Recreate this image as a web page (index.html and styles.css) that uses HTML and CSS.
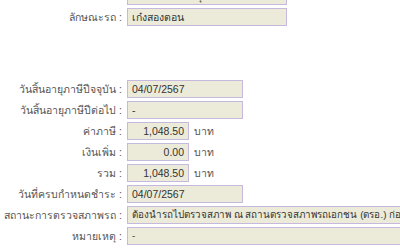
FILE: index.html
```html
<!DOCTYPE html>
<html lang="th">
<head>
    <meta charset="UTF-8">
    <meta name="viewport" content="width=device-width, initial-scale=1.0">
    <title>ข้อมูลภาษีรถ</title>
    <link rel="stylesheet" href="styles.css">
</head>
<body>
    <div class="form">
        <div class="row">
            <span class="label">ประเภทรถ :</span>
            <span class="box wide">รถยนต์นั่งส่วนบุคคลไม่เกิน 7 คน</span>
        </div>
        <div class="row">
            <span class="label">ลักษณะรถ :</span>
            <span class="box wide">เก๋งสองตอน</span>
        </div>
    </div>

    <div class="form tax">
        <div class="row">
            <span class="label">วันสิ้นอายุภาษีปีจจุบัน :</span>
            <span class="box date">04/07/2567</span>
        </div>
        <div class="row">
            <span class="label">วันสิ้นอายุภาษีปีต่อไป :</span>
            <span class="box date">-</span>
        </div>
        <div class="row">
            <span class="label">ค่าภาษี :</span>
            <span class="box money">1,048.50</span>
            <span class="unit">บาท</span>
        </div>
        <div class="row">
            <span class="label">เงินเพิ่ม :</span>
            <span class="box money">0.00</span>
            <span class="unit">บาท</span>
        </div>
        <div class="row">
            <span class="label">รวม :</span>
            <span class="box money">1,048.50</span>
            <span class="unit">บาท</span>
        </div>
        <div class="row">
            <span class="label">วันที่ครบกำหนดชำระ :</span>
            <span class="box date">04/07/2567</span>
        </div>
        <div class="row">
            <span class="label">สถานะการตรวจสภาพรถ :</span>
            <span class="box long">ต้องนำรถไปตรวจสภาพ ณ สถานตรวจสภาพรถเอกชน (ตรอ.) ก่อนยื่นชำระภาษี</span>
        </div>
        <div class="row">
            <span class="label">หมายเหตุ :</span>
            <span class="box long">-</span>
        </div>
    </div>
</body>
</html>
```

FILE: styles.css
```css
body {
    margin: 0;
    font-family: "Liberation Sans", "DejaVu Sans", sans-serif;
    font-size: 10.5px;
    color: #444;
    background-color: #fff;
    overflow: hidden;
}
.form {
    display: flex;
    flex-direction: column;
    gap: 3px;
}
.form:first-child {
    margin-top: -13px;
}
.tax {
    margin-top: 54px;
}
.row {
    display: flex;
    align-items: center;
    gap: 5px;
    height: 18px;
    white-space: nowrap;
}
.label {
    width: 122px;
    flex-shrink: 0;
    text-align: right;
    color: #555;
}
.box {
    box-sizing: border-box;
    height: 18px;
    line-height: 16px;
    padding: 0 4px;
    background-color: #ecebd9;
    border: 1px solid #c6b9de;
    color: #333;
    overflow: hidden;
    flex-shrink: 0;
}
.wide {
    width: 160px;
}
.date {
    width: 116px;
}
.money {
    width: 62px;
    text-align: right;
}
.long {
    width: 320px;
    font-size: 9.8px;
}
.unit {
    color: #555;
}
```
